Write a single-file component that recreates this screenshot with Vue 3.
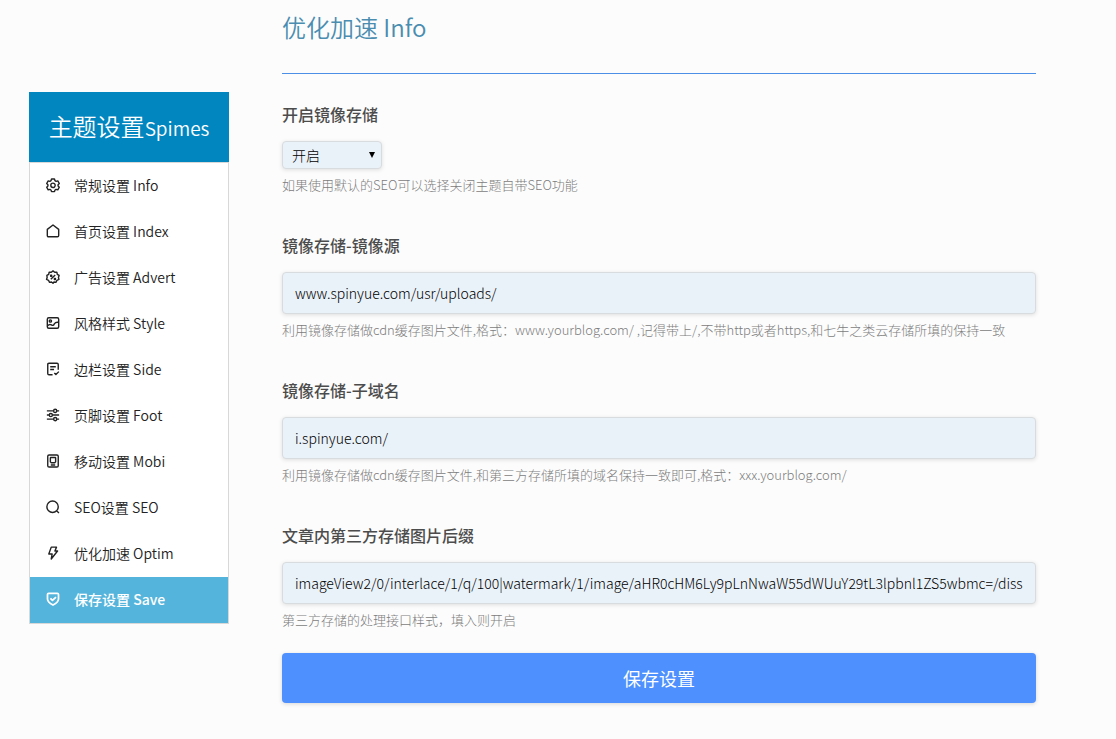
<script setup>
import { ref } from 'vue'

const menu = [
  { icon: 'gear', text: '常规设置 Info' },
  { icon: 'home', text: '首页设置 Index' },
  { icon: 'badge', text: '广告设置 Advert' },
  { icon: 'image', text: '风格样式 Style' },
  { icon: 'note', text: '边栏设置 Side' },
  { icon: 'sliders', text: '页脚设置 Foot' },
  { icon: 'device', text: '移动设置 Mobi' },
  { icon: 'search', text: 'SEO设置 SEO' },
  { icon: 'bolt', text: '优化加速 Optim' },
  { icon: 'shield', text: '保存设置 Save', active: true },
]

const icons = {
  gear: 'M6.300 1.200h3.400l.6 1.900 1.200.7 2-.5 1.700 3-1.400 1.400v1.400l1.400 1.400-1.700 3-2-.5-1.200.7-.6 1.900H6.300l-.6-1.900-1.200-.7-2 .5-1.700-3 1.400-1.400V7.700L.8 6.300l1.700-3 2 .5 1.200-.7zM10.500 8.400a2.500 2.500 0 1 1-5 0a2.500 2.500 0 0 1 5 0z',
  home: 'M1.500 6.200L8 1.200l6.500 5v7q0 1.400-1.400 1.400H2.900q-1.400 0-1.400-1.400z',
  badge: 'M8 1l1.900 1.600 2.500-.2.500 2.500 2.100 1.300L14.200 8.500l.6 2.300-2.300 1-1 2.300-2.400-.4L8 15.200l-1.700-1.500-2.400.4-1-2.300-2.300-1 .7-2.300L1 6.200l2.100-1.300.5-2.500 2.500.2zM5.500 10.700l5-5M5.300 5.900h1.200v1.200H5.300zM9.600 9.700h1.200v1.200H9.600z',
  image: 'M3.200 2h9.600q1.700 0 1.700 1.700v8.600q0 1.700-1.700 1.700H3.200q-1.700 0-1.700-1.700V3.700Q1.500 2 3.200 2zM1.800 11.200Q4 8.700 6.200 10.200T9.500 9Q11 6.600 14.300 7.200M6.300 5.700a1.300 1.300 0 1 1-2.600 0a1.300 1.300 0 0 1 2.600 0z',
  note: 'M7.500 14.500H3.400Q2 14.500 2 13.100V2.900q0-1.400 1.400-1.400h9.200q1.400 0 1.400 1.400v6M4.800 5.500h6.400M4.800 8.500h4.400M9.500 12.600l1.800 1.800 3.400-3.400',
  sliders: 'M1 3.300h7.600M12.400 3.300H15M1 8h2.600M7.400 8H15M1 12.700h7.600M12.400 12.700H15M12.300 3.300a1.800 1.800 0 1 1-3.600 0a1.800 1.800 0 0 1 3.600 0zM7.300 8a1.800 1.800 0 1 1-3.600 0a1.800 1.800 0 0 1 3.600 0zM12.300 12.700a1.800 1.800 0 1 1-3.600 0a1.800 1.800 0 0 1 3.600 0z',
  device: 'M3.500 1.200h9q1.500 0 1.500 1.500v10.600q0 1.500-1.500 1.500h-9Q2 14.800 2 13.300V2.700q0-1.500 1.500-1.500zM5.500 4h5q.5 0 .5.500v4.500L10 10H6L5 9V4.500q0-.5.500-.5zM5.500 12.500h5',
  search: 'M14 7.700a6.500 6.500 0 1 1-13 0a6.500 6.500 0 0 1 13 0zM12.100 12.300l2.700 2.500',
  bolt: 'M6 1.300h6l-1.800 4.400h3L6 14.800l1-5.600H3.200z',
  shield: 'M3 1.500h10q1.300 0 1.300 1.300v5.300q0 3.700-6.300 6.800q-6.300-3.100-6.300-6.800V2.800Q1.700 1.500 3 1.500zM5 7.200l2.400 2.400 4-3.700',
}

const mirror = ref('开启')
const fields = ref([
  {
    id: 'source',
    label: '镜像存储-镜像源',
    value: 'www.spinyue.com/usr/uploads/',
    help: '利用镜像存储做cdn缓存图片文件,格式：www.yourblog.com/ ,记得带上/,不带http或者https,和七牛之类云存储所填的保持一致',
  },
  {
    id: 'domain',
    label: '镜像存储-子域名',
    value: 'i.spinyue.com/',
    help: '利用镜像存储做cdn缓存图片文件,和第三方存储所填的域名保持一致即可,格式：xxx.yourblog.com/',
  },
  {
    id: 'suffix',
    label: '文章内第三方存储图片后缀',
    value: 'imageView2/0/interlace/1/q/100|watermark/1/image/aHR0cHM6Ly9pLnNwaW55dWUuY29tL3lpbnl1ZS5wbmc=/diss',
    help: '第三方存储的处理接口样式，填入则开启',
  },
])
</script>

<template>
  <div class="page">
    <aside class="sidebar">
      <header class="brand">主题设置<small>Spimes</small></header>
      <nav class="menu">
        <a v-for="item in menu" :key="item.icon" href="#" :class="['item', { active: item.active }]">
          <svg class="icon" viewBox="0 0 16 16" aria-hidden="true"><path :d="icons[item.icon]" /></svg>
          <span>{{ item.text }}</span>
        </a>
      </nav>
    </aside>

    <main class="content">
      <h1 class="title">优化加速 Info</h1>
      <form @submit.prevent>
        <div class="group">
          <label class="label" for="mirror">开启镜像存储</label>
          <div class="select-wrap">
            <select id="mirror" v-model="mirror" class="control select">
              <option>开启</option>
              <option>关闭</option>
            </select>
            <svg class="arrow" viewBox="0 0 8 8" aria-hidden="true"><path d="M1 1h6L4 7z" /></svg>
          </div>
          <p class="help">如果使用默认的SEO可以选择关闭主题自带SEO功能</p>
        </div>
        <div v-for="field in fields" :key="field.id" class="group">
          <label class="label" :for="field.id">{{ field.label }}</label>
          <input :id="field.id" v-model="field.value" class="control input" type="text" />
          <p class="help">{{ field.help }}</p>
        </div>
        <button class="submit" type="submit">保存设置</button>
      </form>
    </main>
  </div>
</template>

<style>
body {
  background: #fcfcfc;
}
</style>

<style scoped>
.page,
.page * {
  box-sizing: border-box;
}
.page {
  display: flex;
  align-items: flex-start;
  gap: 53px;
  padding: 0 80px 36px 29px;
  font-family: "Noto Sans CJK SC", "Noto Sans", sans-serif;
  font-size: 14px;
  font-weight: 350;
  color: #333;
}
.sidebar {
  flex: 0 0 200px;
  margin-top: 92px;
}
.brand {
  height: 70px;
  line-height: 68px;
  text-align: center;
  white-space: nowrap;
  font-size: 24px;
  color: #fff;
  background: #0286c0;
}
.brand small {
  font-size: 19px;
}
.menu {
  border: 1px solid #d8d8d8;
  background: #fff;
}
.item {
  display: flex;
  align-items: center;
  gap: 14px;
  height: 46px;
  padding: 0 16px 2px;
  color: #222;
  text-decoration: none;
}
.item.active {
  color: #fff;
  background: #54b4db;
  font-weight: 500;
}
.icon {
  width: 14px;
  height: 14px;
  overflow: visible;
  fill: none;
  stroke: currentColor;
  stroke-width: 1.6;
  stroke-linejoin: round;
}
.active .icon {
  stroke-width: 2;
}
.content {
  flex: 1;
  min-width: 0;
}
.title {
  margin: 0 0 28px;
  padding: 9px 0 28px;
  border-bottom: 1px solid #4c8fe6;
  font-size: 24px;
  font-weight: 350;
  line-height: 36px;
  color: #4a8db0;
}
.group {
  margin-bottom: 38px;
}
.group:last-of-type {
  margin-bottom: 23px;
}
.label {
  display: block;
  margin-bottom: 15px;
  font-size: 16px;
  font-weight: 500;
  line-height: 24px;
  color: #4c4c4c;
}
.control {
  display: block;
  border: 1px solid #d9dcde;
  border-radius: 4px;
  background: #eaf2f9;
  box-shadow: 0 1px 4px rgba(0, 0, 0, 0.12);
  color: #000;
  font-family: inherit;
  font-size: 14px;
  font-weight: 300;
}
.select-wrap {
  position: relative;
  width: 100px;
}
.select {
  appearance: none;
  width: 100%;
  height: 28px;
  padding: 0 9px;
}
.arrow {
  position: absolute;
  top: 10px;
  right: 6px;
  width: 8px;
  height: 8px;
  fill: #000;
  pointer-events: none;
}
.input {
  width: 100%;
  height: 42px;
  padding: 0 12px 1px;
}
.help {
  margin: 6px 0 0;
  font-size: 13px;
  font-weight: 300;
  line-height: 20px;
  color: #7c7c7c;
}
.submit {
  display: block;
  width: 100%;
  height: 50px;
  border: 0;
  border-radius: 4px;
  background: #4d90fe;
  box-shadow: 0 1px 4px rgba(0, 0, 0, 0.15);
  color: #fff;
  font-family: inherit;
  font-size: 18px;
}
</style>
